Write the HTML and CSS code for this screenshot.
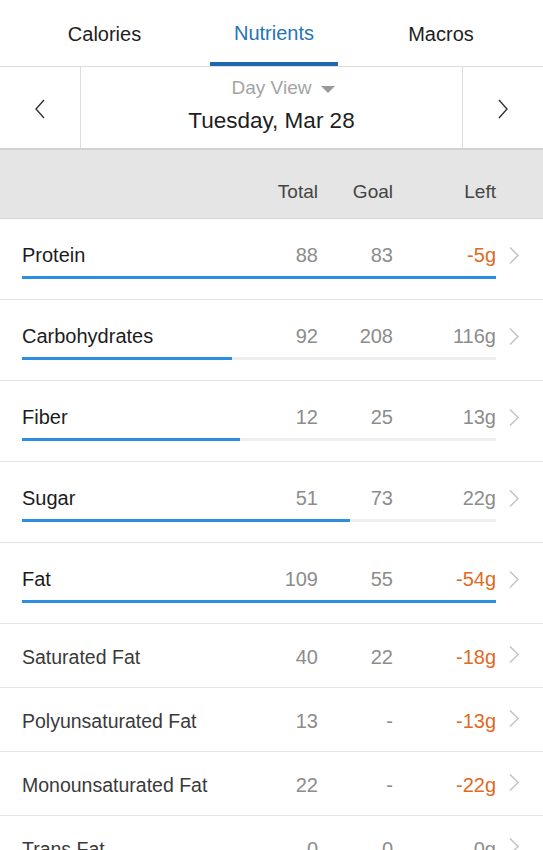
FILE: index.html
```html
<!DOCTYPE html>
<html>
<head>
<meta charset="utf-8">
<link rel="stylesheet" href="styles.css">
</head>
<body>
<div class="app">
  <nav class="tabs">
    <div class="tab">Calories</div>
    <div class="tab active">Nutrients</div>
    <div class="tab">Macros</div>
  </nav>
  <div class="datebar">
    <div class="arrow"><svg width="12" height="20" viewBox="0 0 12 20"><path d="M10 1 L2 10 L10 19" fill="none" stroke="#333" stroke-width="1.4"/></svg></div>
    <div class="date">
      <div class="view"><span class="view-label">Day View<span class="caret"></span></span></div>
      <div class="day">Tuesday, Mar 28</div>
    </div>
    <div class="arrow"><svg width="12" height="20" viewBox="0 0 12 20"><path d="M2 1 L10 10 L2 19" fill="none" stroke="#333" stroke-width="1.4"/></svg></div>
  </div>
  <div class="head">
    <div class="name"></div>
    <div class="c-total">Total</div>
    <div class="c-goal">Goal</div>
    <div class="c-left">Left</div>
    <div class="c-chev"></div>
  </div>

  <div class="row big">
    <div class="line">
      <div class="name">Protein</div>
      <div class="c-total">88</div>
      <div class="c-goal">83</div>
      <div class="c-left over">-5g</div>
      <div class="c-chev"><svg width="12" height="19" viewBox="0 0 12 19"><path d="M2 1.5 L10 9.5 L2 17.5" fill="none" stroke="#c6c6c6" stroke-width="1.6"/></svg></div>
    </div>
    <div class="track"><div class="fill" style="width:100%"></div></div>
  </div>

  <div class="row big">
    <div class="line">
      <div class="name">Carbohydrates</div>
      <div class="c-total">92</div>
      <div class="c-goal">208</div>
      <div class="c-left">116g</div>
      <div class="c-chev"><svg width="12" height="19" viewBox="0 0 12 19"><path d="M2 1.5 L10 9.5 L2 17.5" fill="none" stroke="#c6c6c6" stroke-width="1.6"/></svg></div>
    </div>
    <div class="track"><div class="fill" style="width:44.2%"></div></div>
  </div>

  <div class="row big">
    <div class="line">
      <div class="name">Fiber</div>
      <div class="c-total">12</div>
      <div class="c-goal">25</div>
      <div class="c-left">13g</div>
      <div class="c-chev"><svg width="12" height="19" viewBox="0 0 12 19"><path d="M2 1.5 L10 9.5 L2 17.5" fill="none" stroke="#c6c6c6" stroke-width="1.6"/></svg></div>
    </div>
    <div class="track"><div class="fill" style="width:46%"></div></div>
  </div>

  <div class="row big">
    <div class="line">
      <div class="name">Sugar</div>
      <div class="c-total">51</div>
      <div class="c-goal">73</div>
      <div class="c-left">22g</div>
      <div class="c-chev"><svg width="12" height="19" viewBox="0 0 12 19"><path d="M2 1.5 L10 9.5 L2 17.5" fill="none" stroke="#c6c6c6" stroke-width="1.6"/></svg></div>
    </div>
    <div class="track"><div class="fill" style="width:69.2%"></div></div>
  </div>

  <div class="row big">
    <div class="line">
      <div class="name">Fat</div>
      <div class="c-total">109</div>
      <div class="c-goal">55</div>
      <div class="c-left over">-54g</div>
      <div class="c-chev"><svg width="12" height="19" viewBox="0 0 12 19"><path d="M2 1.5 L10 9.5 L2 17.5" fill="none" stroke="#c6c6c6" stroke-width="1.6"/></svg></div>
    </div>
    <div class="track"><div class="fill" style="width:100%"></div></div>
  </div>

  <div class="row small">
    <div class="line">
      <div class="name">Saturated Fat</div>
      <div class="c-total">40</div>
      <div class="c-goal">22</div>
      <div class="c-left over">-18g</div>
      <div class="c-chev"><svg width="12" height="19" viewBox="0 0 12 19"><path d="M2 1.5 L10 9.5 L2 17.5" fill="none" stroke="#c6c6c6" stroke-width="1.6"/></svg></div>
    </div>
  </div>

  <div class="row small">
    <div class="line">
      <div class="name">Polyunsaturated Fat</div>
      <div class="c-total">13</div>
      <div class="c-goal">-</div>
      <div class="c-left over">-13g</div>
      <div class="c-chev"><svg width="12" height="19" viewBox="0 0 12 19"><path d="M2 1.5 L10 9.5 L2 17.5" fill="none" stroke="#c6c6c6" stroke-width="1.6"/></svg></div>
    </div>
  </div>

  <div class="row small">
    <div class="line">
      <div class="name">Monounsaturated Fat</div>
      <div class="c-total">22</div>
      <div class="c-goal">-</div>
      <div class="c-left over">-22g</div>
      <div class="c-chev"><svg width="12" height="19" viewBox="0 0 12 19"><path d="M2 1.5 L10 9.5 L2 17.5" fill="none" stroke="#c6c6c6" stroke-width="1.6"/></svg></div>
    </div>
  </div>

  <div class="row small">
    <div class="line">
      <div class="name">Trans Fat</div>
      <div class="c-total">0</div>
      <div class="c-goal">0</div>
      <div class="c-left">0g</div>
      <div class="c-chev"><svg width="12" height="19" viewBox="0 0 12 19"><path d="M2 1.5 L10 9.5 L2 17.5" fill="none" stroke="#c6c6c6" stroke-width="1.6"/></svg></div>
    </div>
  </div>
</div>
</body>
</html>
```

FILE: styles.css
```css
html, body {
  margin: 0;
  padding: 0;
  background: #fff;
}
body {
  font-family: "Liberation Sans", Arial, sans-serif;
  color: #222;
  width: 543px;
  height: 850px;
  overflow: hidden;
}
.app {
  width: 543px;
}
.tabs {
  display: grid;
  grid-template-columns: 209px 130px 1fr;
  height: 66px;
  border-bottom: 1px solid #dcdcdc;
  box-sizing: content-box;
}
.tab {
  display: flex;
  align-items: center;
  justify-content: center;
  font-size: 20px;
  color: #1e1e1e;
  padding-top: 2px;
  box-sizing: border-box;
}
.tab.active {
  color: #2674b8;
  border-bottom: 4px solid #1c68b2;
  padding-top: 5px;
  margin: 0 1px;
}
.datebar {
  display: grid;
  grid-template-columns: 80px 1fr 80px;
  height: 81px;
  border-bottom: 2px solid #d2d2d2;
}
.arrow {
  display: flex;
  align-items: center;
  justify-content: center;
  padding-top: 2px;
}
.date {
  border-left: 1px solid #dcdcdc;
  border-right: 1px solid #dcdcdc;
  display: flex;
  flex-direction: column;
  align-items: center;
  padding-top: 9px;
  box-sizing: border-box;
}
.view {
  font-size: 19px;
  color: #a4a4a4;
  height: 24px;
  line-height: 24px;
}
.view-label {
  position: relative;
}
.caret {
  position: absolute;
  right: -24px;
  top: 9px;
  width: 0;
  height: 0;
  border-left: 7px solid transparent;
  border-right: 7px solid transparent;
  border-top: 7px solid #9a9a9a;
}
.day {
  margin-top: 7px;
  font-size: 22.5px;
  color: #1e1e1e;
  line-height: 28px;
}
.head {
  display: flex;
  align-items: center;
  height: 69px;
  background: #e5e5e5;
  padding-left: 22px;
  padding-top: 16px;
  box-sizing: border-box;
  border-bottom: 1px solid #d4d4d4;
  font-size: 19px;
  color: #444;
}
.name {
  flex: 1;
}
.c-total {
  width: 60px;
  text-align: right;
}
.c-goal {
  width: 75px;
  text-align: right;
}
.c-left {
  width: 103px;
  text-align: right;
}
.c-chev {
  width: 47px;
  display: flex;
  justify-content: flex-start;
  padding-left: 12px;
  box-sizing: border-box;
}
.head .c-total { width: 59px; }
.head .c-goal { width: 75px; }
.row {
  border-bottom: 1px solid #e4e4e4;
  padding-left: 22px;
  box-sizing: border-box;
}
.row.big {
  height: 81px;
  padding-top: 24px;
}
.row.small {
  height: 64px;
  padding-top: 21px;
}
.line {
  display: flex;
  align-items: center;
  height: 24px;
}
.row .name {
  font-size: 20px;
  color: #1c1c1c;
}
.row.small .name {
  font-size: 19.5px;
  color: #3a3a3a;
}
.row .c-total,
.row .c-goal,
.row .c-left {
  font-size: 20px;
  color: #8c8c8c;
}
.row .c-left.over {
  color: #e06a22;
}
.row.small .c-chev {
  margin-top: -6px;
}
.track {
  margin-top: 9px;
  width: 474px;
  height: 3px;
  background: #eeeeee;
}
.fill {
  height: 3px;
  background: #2b8ee0;
}
```
